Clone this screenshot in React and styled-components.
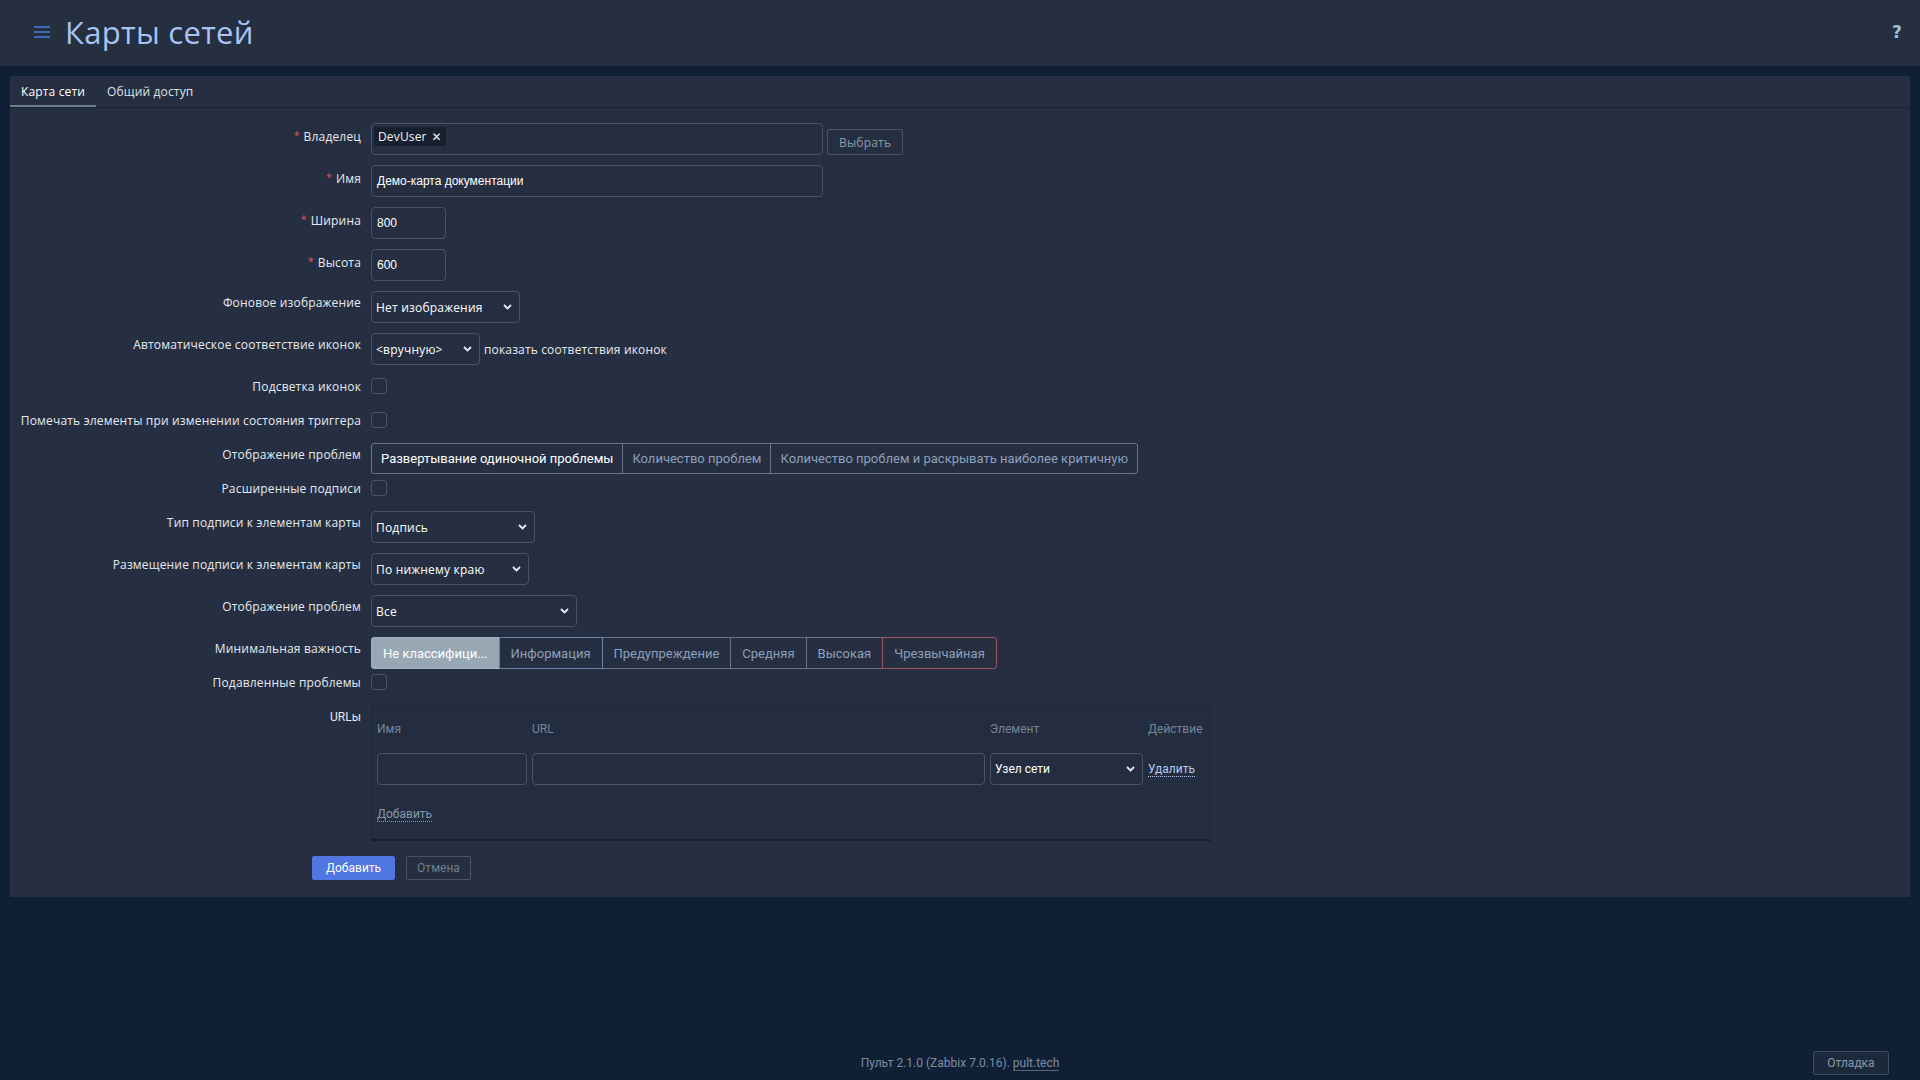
import styled, { createGlobalStyle } from "styled-components";

const GlobalStyle = createGlobalStyle`
  html, body {
    margin: 0;
    padding: 0;
    background: #0f2036;
  }
  body {
    font-family: "Open Sans", "Liberation Sans", sans-serif;
    font-size: 12px;
    letter-spacing: 0.15px;
    color: #e3e7ee;
  }
  * {
    box-sizing: border-box;
  }
`;

const Page = styled.div`
  min-height: 100vh;
  display: flex;
  flex-direction: column;
`;

const Header = styled.header`
  height: 66px;
  background: #262f40;
  display: flex;
  align-items: center;
  padding: 0 18px 3px 34px;
`;

const Title = styled.h1`
  margin: 0 0 0 15px;
  font-size: 31px;
  font-weight: 400;
  color: #a8c3f4;
  letter-spacing: 0.3px;
`;

const Help = styled.span`
  margin-left: auto;
  font-family: "DejaVu Sans", sans-serif;
  font-size: 17px;
  font-weight: 700;
  color: #a5bedc;
`;

const Main = styled.main`
  flex: 1;
  padding: 10px 10px 0;
`;

const Panel = styled.section`
  background: #252f41;
  padding-bottom: 17px;
`;

const TabBar = styled.nav`
  display: flex;
  height: 32px;
  border-bottom: 1px solid #1a2333;
`;

const Tab = styled.div`
  display: flex;
  align-items: center;
  padding: 2px 11px 0;
  color: ${(p) => (p.$active ? "#ffffff" : "#dde3ea")};
  border-bottom: 2px solid ${(p) => (p.$active ? "#6c7d8a" : "transparent")};
`;

const Form = styled.div`
  display: grid;
  grid-template-columns: 351px 1fr;
  column-gap: 10px;
  row-gap: 10px;
  padding-top: 15px;
`;

const Label = styled.div`
  text-align: right;
  line-height: 24px;
  white-space: nowrap;
  color: #e6eaf0;
  font-family: ${(p) => (p.$plain ? "Roboto, sans-serif" : "inherit")};
  letter-spacing: ${(p) => (p.$plain ? 0 : 0.17)}px;
`;

const Star = styled.span`
  color: #e05a5a;
  font-size: 10px;
  vertical-align: 2px;
  margin-right: 4px;
`;

const Field = styled.div`
  display: flex;
  align-items: flex-start;
  gap: 4px;
  min-height: 24px;
`;

const TextInput = styled.div`
  width: ${(p) => p.$w}px;
  height: 32px;
  border: 1px solid #4a5366;
  border-radius: 4px;
  padding: 0 5px;
  display: flex;
  align-items: center;
  font-family: "Liberation Sans", Arial, sans-serif;
  font-size: 12px;
  letter-spacing: 0;
  color: #ffffff;
`;

const MultiSelect = styled.div`
  width: 452px;
  height: 32px;
  border: 1px solid #4a5366;
  border-radius: 4px;
  padding: 3px 2px;
`;

const Tag = styled.span`
  display: inline-flex;
  align-items: center;
  gap: 5px;
  height: 19px;
  padding: 0 4px;
  border-radius: 2px;
  background: #16202f;
  color: #f2f4f8;
`;

const TagClose = styled.span`
  font-family: "DejaVu Sans", sans-serif;
  font-size: 12px;
  font-weight: 700;
`;

const GhostButton = styled.button`
  align-self: flex-end;
  height: 26px;
  padding: 0 11px;
  border: 1px solid #4a5366;
  border-radius: 2px;
  background: transparent;
  color: #8c9aac;
  font-family: "Open Sans", sans-serif;
  font-size: 12px;
  letter-spacing: 0.2px;
`;

const Select = styled.div`
  width: ${(p) => p.$w}px;
  height: 32px;
  border: 1px solid #4a5366;
  border-radius: 4px;
  padding: 0 7px 0 4px;
  display: flex;
  align-items: center;
  justify-content: space-between;
  color: #ffffff;
  font-family: ${(p) => (p.$plain ? "Roboto, sans-serif" : "inherit")};
  letter-spacing: ${(p) => (p.$plain ? 0 : 0.2)}px;
`;

const Hint = styled.span`
  align-self: center;
  color: #e6eaf0;
`;

const Checkbox = styled.span`
  display: block;
  width: 16px;
  height: 16px;
  margin-top: 3px;
  border: 1px solid #4a5366;
  border-radius: 3px;
`;

const Segmented = styled.div`
  display: flex;
  height: 24px;
  overflow: visible;
`;

const Segment = styled.span`
  display: flex;
  align-items: center;
  flex-shrink: 0;
  height: ${(p) => p.$h}px;
  padding: 0 ${(p) => p.$pad}px;
  margin-left: -1px;
  border: 1px solid ${(p) => p.$edge || "#6b7587"};
  font-family: Roboto, sans-serif;
  font-size: 13px;
  letter-spacing: 0;
  white-space: nowrap;
  color: ${(p) => (p.$active ? "#ffffff" : "#8d9fba")};
  background: ${(p) => p.$fill || "transparent"};
  position: relative;
  z-index: ${(p) => (p.$edge ? 1 : 0)};
  &:first-child {
    margin-left: 0;
    border-radius: 3px 0 0 3px;
  }
  &:last-child {
    border-radius: 0 3px 3px 0;
  }
`;

const UrlBox = styled.div`
  width: 840px;
  border: 1px solid #1d2737;
  border-bottom: 2px solid #15202e;
  background: #232d3f;
  padding: 0 5px;
  font-family: Roboto, sans-serif;
  letter-spacing: 0;
`;

const UrlGrid = styled.div`
  display: grid;
  grid-template-columns: 150px 453px 153px auto;
  column-gap: 5px;
  align-items: center;
`;

const HeadCell = styled.div`
  padding: 15px 0 16px;
  line-height: 16px;
  color: #77849a;
  font-size: 12px;
`;

const Link = styled.span`
  color: ${(p) => (p.$light ? "#b5c9ee" : "#8896aa")};
  border-bottom: 1px dotted currentColor;
  font-size: 12px;
  line-height: 14px;
  justify-self: start;
`;

const AddRow = styled.div`
  padding: 21px 0 17px;
  line-height: 16px;
`;

const Actions = styled.div`
  display: flex;
  gap: 11px;
  padding: 15px 0 0 302px;
`;

const Button = styled.button`
  height: 24px;
  padding: 0 ${(p) => (p.$primary ? 13 : 10)}px;
  border: 1px solid ${(p) => (p.$primary ? "#4f76e2" : "#4a5366")};
  border-radius: 2px;
  background: ${(p) => (p.$primary ? "#4f76e2" : "transparent")};
  color: ${(p) => (p.$primary ? "#ffffff" : "#6f7d91")};
  font-family: Roboto, sans-serif;
  font-size: 12px;
`;

const Footer = styled.footer`
  display: grid;
  grid-template-columns: 1fr auto 1fr;
  align-items: center;
  height: 34px;
  font-family: Roboto, sans-serif;
  font-size: 12px;
  letter-spacing: 0;
  color: #7e8ca0;
`;

const FooterLink = styled.span`
  border-bottom: 1px solid #55647a;
`;

const DebugButton = styled.button`
  justify-self: end;
  margin-right: 31px;
  height: 24px;
  width: 76px;
  border: 1px solid #3f4b5e;
  border-radius: 2px;
  background: #1c293b;
  color: #8b98a9;
  font-family: Roboto, sans-serif;
  font-size: 12px;
`;

const Burger = () => (
  <svg width="16" height="12" viewBox="0 0 16 12">
    <rect x="0" y="0" width="16" height="2" fill="#3b6bb5" />
    <rect x="0" y="5" width="16" height="2" fill="#3b6bb5" />
    <rect x="0" y="10" width="16" height="2" fill="#3b6bb5" />
  </svg>
);

const Chevron = () => (
  <svg width="9" height="6" viewBox="0 0 9 6">
    <path d="M1 1l3.5 3.5L8 1" fill="none" stroke="#e8ecf2" strokeWidth="1.8" />
  </svg>
);

const Row = ({ label, required, plain, children }) => (
  <>
    <Label $plain={plain}>
      {required && <Star>*</Star>}
      {label}
    </Label>
    <Field>{children}</Field>
  </>
);

const problemModes = [
  { text: "Развертывание одиночной проблемы", active: true },
  { text: "Количество проблем" },
  { text: "Количество проблем и раскрывать наиболее критичную" },
];

const severities = [
  { text: "Не классифици...", fill: "#97a7b3", active: true, edge: "#a4b2bc" },
  { text: "Информация", edge: "#6f7fa8" },
  { text: "Предупреждение" },
  { text: "Средняя" },
  { text: "Высокая" },
  { text: "Чрезвычайная", edge: "#9c5461" },
];

export default function App() {
  return (
    <Page>
      <GlobalStyle />
      <Header>
        <Burger />
        <Title>Карты сетей</Title>
        <Help>?</Help>
      </Header>
      <Main>
        <Panel>
          <TabBar>
            <Tab $active>Карта сети</Tab>
            <Tab>Общий доступ</Tab>
          </TabBar>
          <Form>
            <Row label="Владелец" required>
              <MultiSelect>
                <Tag>
                  DevUser <TagClose>✕</TagClose>
                </Tag>
              </MultiSelect>
              <GhostButton>Выбрать</GhostButton>
            </Row>
            <Row label="Имя" required>
              <TextInput $w={452}>Демо-карта документации</TextInput>
            </Row>
            <Row label="Ширина" required>
              <TextInput $w={75}>800</TextInput>
            </Row>
            <Row label="Высота" required>
              <TextInput $w={75}>600</TextInput>
            </Row>
            <Row label="Фоновое изображение">
              <Select $w={149}>
                Нет изображения <Chevron />
              </Select>
            </Row>
            <Row label="Автоматическое соответствие иконок">
              <Select $w={109}>
                {"<вручную>"} <Chevron />
              </Select>
              <Hint>показать соответствия иконок</Hint>
            </Row>
            <Row label="Подсветка иконок">
              <Checkbox />
            </Row>
            <Row label="Помечать элементы при изменении состояния триггера">
              <Checkbox />
            </Row>
            <Row label="Отображение проблем">
              <Segmented>
                {problemModes.map((m) => (
                  <Segment key={m.text} $h={31} $pad={9} $active={m.active}>
                    {m.text}
                  </Segment>
                ))}
              </Segmented>
            </Row>
            <Row label="Расширенные подписи">
              <Checkbox />
            </Row>
            <Row label="Тип подписи к элементам карты">
              <Select $w={164}>
                Подпись <Chevron />
              </Select>
            </Row>
            <Row label="Размещение подписи к элементам карты">
              <Select $w={158}>
                По нижнему краю <Chevron />
              </Select>
            </Row>
            <Row label="Отображение проблем">
              <Select $w={206}>
                Все <Chevron />
              </Select>
            </Row>
            <Row label="Минимальная важность">
              <Segmented>
                {severities.map((s) => (
                  <Segment
                    key={s.text}
                    $h={32}
                    $pad={11}
                    $active={s.active}
                    $fill={s.fill}
                    $edge={s.edge}
                  >
                    {s.text}
                  </Segment>
                ))}
              </Segmented>
            </Row>
            <Row label="Подавленные проблемы">
              <Checkbox />
            </Row>
            <Row label="URLы" plain>
              <UrlBox>
                <UrlGrid>
                  <HeadCell>Имя</HeadCell>
                  <HeadCell>URL</HeadCell>
                  <HeadCell>Элемент</HeadCell>
                  <HeadCell>Действие</HeadCell>
                  <TextInput $w={150} />
                  <TextInput $w={453} />
                  <Select $w={153} $plain>
                    Узел сети <Chevron />
                  </Select>
                  <Link $light>Удалить</Link>
                </UrlGrid>
                <AddRow>
                  <Link>Добавить</Link>
                </AddRow>
              </UrlBox>
            </Row>
          </Form>
          <Actions>
            <Button $primary>Добавить</Button>
            <Button>Отмена</Button>
          </Actions>
        </Panel>
      </Main>
      <Footer>
        <span />
        <span>
          Пульт 2.1.0 (Zabbix 7.0.16). <FooterLink>pult.tech</FooterLink>
        </span>
        <DebugButton>Отладка</DebugButton>
      </Footer>
    </Page>
  );
}
